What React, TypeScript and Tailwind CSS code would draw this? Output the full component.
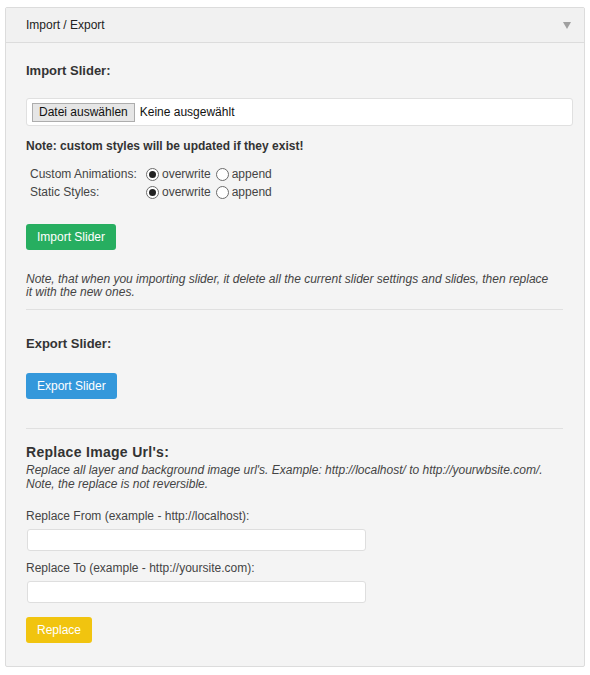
import React from 'react';

const font = { fontFamily: '"Liberation Sans", Arial, sans-serif' };

// radio bullet drawn by hand so it looks the same as the reference
function Radio({ checked }: { checked?: boolean }) {
    return (
        <span className="flex h-[13px] w-[13px] items-center justify-center rounded-full border border-[#6b6b6b] bg-white">
            {checked && <span className="h-[7px] w-[7px] rounded-full bg-[#222]" />}
        </span>
    );
}

function RadioRow({ label }: { label: string }) {
    return (
        <div className="grid h-[18px] grid-cols-[116px_auto] items-center">
            <span>{label}</span>
            <div className="flex items-center">
                <Radio checked />
                <span className="ml-[3px]">overwrite</span>
                <span className="ml-[5px]"><Radio /></span>
                <span className="ml-[3px]">append</span>
            </div>
        </div>
    );
}

const btn = 'h-[26px] rounded-[3px] px-[11px] text-[12px] leading-[26px] text-white';

export default function App() {
    return (
        <div className="min-h-[675px] bg-white pt-[7px] pl-[5px]" style={font}>
            <div className="w-[580px] rounded-[2px] border border-[#dcdcdc] bg-[#f4f4f4]">
                {/* panel header */}
                <div className="flex h-[35px] items-center justify-between border-b border-[#dcdcdc] bg-[#f1f1f1] pl-[20px] pr-[13px]">
                    <span className="text-[12px] text-[#222]">Import / Export</span>
                    <svg width="8" height="7" viewBox="0 0 8 7">
                        <polygon points="0,0 8,0 4,7" fill="#a0a0a0" />
                    </svg>
                </div>

                <div className="pt-[18px] pb-[23px] pl-[20px] text-[12px] text-[#333]">
                    <h3 className="text-[13px] font-bold leading-[20px] text-[#333]">Import Slider:</h3>

                    <div className="mt-[17px] flex h-[28px] w-[547px] items-center rounded-[3px] border border-[#e0e0e0] bg-white pl-[5px]">
                        <span className="flex h-[19px] items-center border border-[#adadad] bg-[#e6e6e6] px-[6px] text-[12px] text-[#111]">
                            Datei auswählen
                        </span>
                        <span className="ml-[5px] text-[12px] text-[#111]">Keine ausgewählt</span>
                    </div>

                    <p className="mt-[12px] font-bold leading-[16px] text-[#333]">Note: custom styles will be updated if they exist!</p>

                    <div className="mt-[11px] ml-[4px] text-[#444]">
                        <RadioRow label="Custom Animations:" />
                        <RadioRow label="Static Styles:" />
                    </div>

                    <button className={`mt-[23px] block bg-[#27ae60] ${btn}`}>Import Slider</button>

                    <p className="mt-[23px] w-[525px] italic leading-[13px] text-[#444]">
                        Note, that when you importing slider, it delete all the current slider settings and slides, then replace it with the new ones.
                    </p>

                    <div className="mt-[10px] h-px w-[537px] bg-[#e0e0e0]" />

                    <h3 className="mt-[24px] text-[13px] font-bold leading-[20px] text-[#333]">Export Slider:</h3>

                    <button className={`mt-[19px] block bg-[#3498db] ${btn}`}>Export Slider</button>

                    <div className="mt-[29px] h-px w-[537px] bg-[#e0e0e0]" />

                    <h3 className="mt-[13px] text-[14px] font-bold leading-[20px] tracking-[0.3px] text-[#333]">Replace Image Url's:</h3>
                    <p className="mt-[1px] w-[545px] italic leading-[14px] text-[#444]">
                        Replace all layer and background image url's. Example: http://localhost/ to http://yourwbsite.com/. Note, the replace is not reversible.
                    </p>

                    <label className="mt-[17px] block leading-[16px] text-[#444]">Replace From (example - http://localhost):</label>
                    <input className="mt-[5px] ml-px block h-[22px] w-[339px] rounded-[3px] border border-[#dedede] bg-white" />

                    <label className="mt-[9px] block leading-[16px] text-[#444]">Replace To (example - http://yoursite.com):</label>
                    <input className="mt-[5px] ml-px block h-[22px] w-[339px] rounded-[3px] border border-[#dedede] bg-white" />

                    <button className={`mt-[14px] block bg-[#f1c40f] ${btn}`}>Replace</button>
                </div>
            </div>
        </div>
    );
}
